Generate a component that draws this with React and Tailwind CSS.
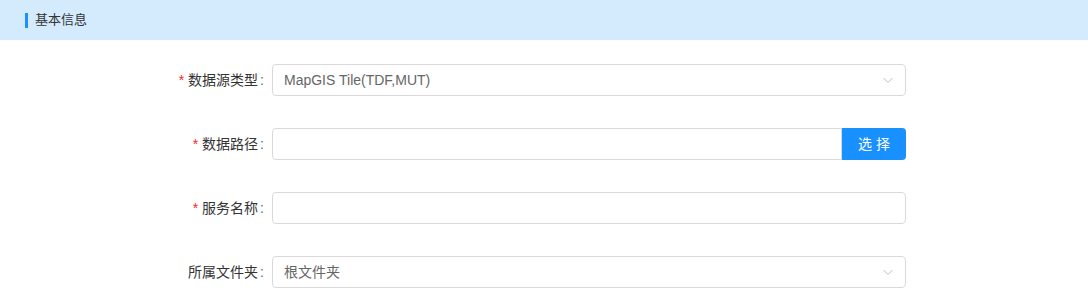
import React from 'react';

const font = { fontFamily: '"Liberation Sans", "Noto Sans CJK SC", sans-serif' };

const Chevron = () => (
  <svg width="12" height="12" viewBox="0 0 12 12" fill="none" className="text-[#bfbfbf]">
    <polyline points="1.5,4 6,8.5 10.5,4" stroke="currentColor" strokeWidth="1" />
  </svg>
);

const Label = ({ required, children }) => (
  <div className="w-[272px] shrink-0 flex justify-end items-center pr-2 text-[14px] text-[#333]">
    {required && <span className="text-[#f5222d] mr-1 text-[14px] leading-none">*</span>}
    <span>{children}</span>
    <span className="ml-[2px] text-[#666]">:</span>
  </div>
);

const App = () => {
  return (
    <div className="w-[1088px] h-[304px] bg-white overflow-hidden" style={font}>
      {/* Header */}
      <div className="h-10 bg-[#d3ebfd] flex items-center pl-[25px]">
        <span className="w-[3px] h-[15px] bg-[#1890ff] mr-[7px]" />
        <span className="text-[13px] text-[#333]">基本信息</span>
      </div>

      <div className="pt-6 flex flex-col gap-8">
        <div className="flex items-center h-8">
          <Label required>数据源类型</Label>
          <div className="w-[634px] h-8 border border-[#d9d9d9] rounded flex items-center justify-between pl-[11px] pr-[11px] text-[14px] text-[#666]">
            <span>MapGIS Tile(TDF,MUT)</span>
            <Chevron />
          </div>
        </div>

        <div className="flex items-center h-8">
          <Label required>数据路径</Label>
          <div className="w-[634px] h-8 flex">
            <div className="flex-1 border border-[#d9d9d9] rounded-l" />
            <button className="w-16 h-8 bg-[#1890ff] text-white text-[14px] rounded-r tracking-[4px] pl-1">选择</button>
          </div>
        </div>

        <div className="flex items-center h-8">
          <Label required>服务名称</Label>
          <div className="w-[634px] h-8 border border-[#d9d9d9] rounded" />
        </div>

        <div className="flex items-center h-8">
          <Label>所属文件夹</Label>
          <div className="w-[634px] h-8 border border-[#d9d9d9] rounded flex items-center justify-between pl-[11px] pr-[11px] text-[14px] text-[#666]">
            <span>根文件夹</span>
            <Chevron />
          </div>
        </div>
      </div>
    </div>
  );
};

export default App;
